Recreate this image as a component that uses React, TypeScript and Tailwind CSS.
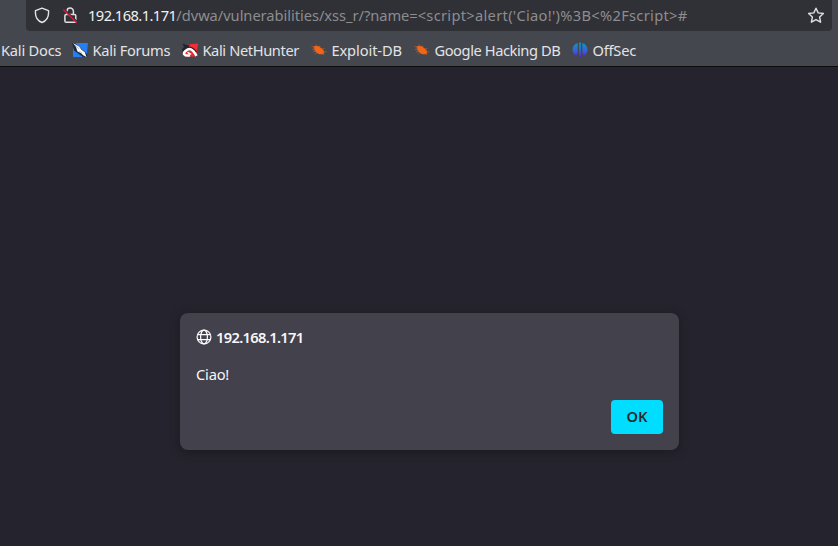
import React from "react";

function Shield() {
  return (
    <svg width="16" height="18" viewBox="0 0 16 18" fill="none" stroke="#e4e4e5" strokeWidth="1.4" strokeLinejoin="round">
      <path d="M8 1.2 14.5 3.600C15 9 13 13.600 8 15.500 3 13.600 1 9 1.500 3.600Z" />
    </svg>
  );
}

function InsecureLock() {
  return (
    <svg width="16" height="18" viewBox="0 0 16 18" fill="none">
      <path d="M5 7.500V4.200a3.200 3.200 0 0 1 6.400 0v3.300M4.200 7.500h8.300a1.300 1.300 0 0 1 1.300 1.300v5.200a1.300 1.300 0 0 1-1.300 1.300H4.200a1.300 1.300 0 0 1-1.300-1.300V8.800A1.300 1.300 0 0 1 4.200 7.500Z" stroke="#e0e0e0" strokeWidth="1.5" />
      <path d="M2 2 15 14.500" stroke="#303136" strokeWidth="1.500" />
      <path d="M1.300 2.500 14.800 15.700" stroke="#e3173e" strokeWidth="1.400" />
    </svg>
  );
}

function Star() {
  return (
    <svg width="18" height="18" viewBox="0 0 18 18" fill="none" stroke="#e0e0e1" strokeWidth="1.4" strokeLinejoin="round">
      <path d="m9 1.200 2.200 4.700 5.200.6-3.800 3.500 1 5.200L9 12.700l-4.600 2.500 1-5.200L1.600 6.500l5.200-.6Z" />
    </svg>
  );
}

function ForumsIcon() {
  return (
    <svg width="16" height="16" viewBox="0 0 16 16">
      <path d="M1 1h15l-1.500 14H1Z" fill="#267ff0" />
      <path d="M0 1h3l12 11 .3 3H11L2 8.500Z" fill="#202a3c" />
      <path d="m1 1 6 3.500 2.500 3.300 3.300 2.500L14.500 15l-3.300-1.700-2-2L5.500 9.500 4 5Z" fill="#fff" />
      <path d="m3 3 4 4M7 9l3 2" stroke="#91a9c5" strokeWidth=".6" />
    </svg>
  );
}

function NetHunterIcon() {
  return (
    <svg width="16" height="16" viewBox="0 0 16 16" fill="none">
      <path d="M5 2.500 16 1.500 14.500 13 10 7Z" fill="#f52d35" />
      <path d="M.5 1.500 5 3l3-.5L6 5 3 8 .5 10 0 7l2-2Z" fill="#22252d" />
      <path d="M1 9 2.800 14.500H14l1-2-5-5-5 2Z" fill="#ed2634" />
      <path d="M2.500 9.500C6.500 4.500 10 4.500 14 10.500" stroke="#202129" strokeWidth="2.500" />
      <path d="M8 13.300C2 14.500.7 11.500 3.500 9 7.500 5.500 10.500 6.500 14.500 13.800" stroke="#fff" strokeWidth="2.500" />
      <path d="m5.500 10.300 3.500 2" stroke="#fff" strokeWidth="1.400" />
    </svg>
  );
}

function BugIcon() {
  return (
    <svg width="16" height="16" viewBox="0 0 16 16" fill="none">
      <path d="M2.500 4.500C5 3 8 4 10 6c2 1.200 4 3.500 3 5.500-2 1.500-5.500 1-7.500-1C3.500 9 3 7 2.500 4.500Z" fill="#f26516" />
      <path d="m4 5-3.500-.5M4 7 1 7.500M5 9l-3 1M6 10.500 4 12M6 4.500 5 2.500M9 5 8.500 3.500M11 7l2.500-.5M12 9.500l3.500.5M12 11.500l1 1.800" stroke="#b95a32" strokeWidth=".7" />
    </svg>
  );
}

function OffSecIcon() {
  return (
    <svg width="16" height="16" viewBox="0 0 16 16">
      <defs>
        <linearGradient id="offsec" gradientUnits="userSpaceOnUse" x1="0" y1="0" x2="0" y2="16">
          <stop stopColor="#079dc5" />
          <stop offset=".55" stopColor="#3861d1" />
          <stop offset="1" stopColor="#611bd7" />
        </linearGradient>
      </defs>
      <path d="M5.700 1C-.9 3-1 11.200 4.200 14L5.700 10.500ZM10.300 1c6.600 2 6.700 10.200 1.500 13L10.300 10.500ZM7.100.5H8.900V15.500H7.100Z" fill="url(#offsec)" />
    </svg>
  );
}

function Globe() {
  return (
    <svg width="16" height="16" viewBox="0 0 16 16" fill="none" stroke="#fbfbfe" strokeWidth="1.250">
      <circle cx="8" cy="8" r="6.900" />
      <ellipse cx="8" cy="8" rx="3.400" ry="6.900" />
      <path d="M1.500 5.500h13M1.500 10.500h13" />
    </svg>
  );
}

function Bookmark({ icon, label, className }: { icon?: React.ReactNode; label: string; className: string }) {
  return (
    <div className={`flex shrink-0 items-center gap-[4.4px] ${className}`}>
      {icon}
      <span>{label}</span>
    </div>
  );
}

export default function App() {
  return (
    <div className="flex h-[546px] w-[838px] flex-col overflow-hidden bg-[#25232d] font-['Noto_Sans',sans-serif] text-[14.67px] leading-5 text-[#e3e3e5]">
      <header className="flex h-[67px] shrink-0 flex-col border-b border-[#0c0c0d] bg-[#45474e]">
        <div className="ml-[26px] flex h-[31px] w-[806px] shrink-0 items-center rounded-b bg-[#303136] pr-[7px] pl-2">
          <Shield />
          <div className="ml-3"><InsecureLock /></div>
          <div className="ml-[10px] flex-1 whitespace-pre pb-0.5 text-[#8c8d91]">
            <span className="tracking-[-0.56px] text-[#f1f1f2]">192.168.1.171</span>
            <span className="tracking-[-0.04px]">/dvwa/vulnerabilities/xss_r/?name=</span>
            <span className="tracking-[0.3px]">{"<script>alert('Ciao!')%3B<%2Fscript>#"}</span>
          </div>
          <Star />
        </div>
        <nav className="flex h-[35px] items-center whitespace-nowrap pt-[3px] pl-px">
          <Bookmark className="w-[71px] tracking-[-0.22px]" label="Kali Docs" />
          <Bookmark className="w-[110px] tracking-[-0.28px]" icon={<ForumsIcon />} label="Kali Forums" />
          <Bookmark className="w-[129px] tracking-[-0.38px]" icon={<NetHunterIcon />} label="Kali NetHunter" />
          <Bookmark className="w-[103px] tracking-[-0.1px]" icon={<BugIcon />} label="Exploit-DB" />
          <Bookmark className="w-[158px] tracking-[-0.42px]" icon={<BugIcon />} label="Google Hacking DB" />
          <Bookmark className="tracking-[-0.2px]" icon={<OffSecIcon />} label="OffSec" />
        </nav>
      </header>
      <main className="flex justify-center pt-[246px]">
        <section className="mr-[-21px] flex h-[137px] w-[499px] flex-col rounded-lg bg-[#43414c] px-4 pt-[14px] pb-4 text-[#f7f7fa] shadow-[0_2px_10px_#1b1a21]">
          <div className="flex h-5 items-center gap-1 font-semibold">
            <Globe />
            <span className="tracking-[-0.65px]">192.168.1.171</span>
          </div>
          <p className="mt-[17px] tracking-[-0.2px]">Ciao!</p>
          <button className="mt-auto h-[34px] w-[52px] self-end rounded bg-[#00ddff] pb-0.5 font-semibold text-[#2b2a33]">OK</button>
        </section>
      </main>
    </div>
  );
}
